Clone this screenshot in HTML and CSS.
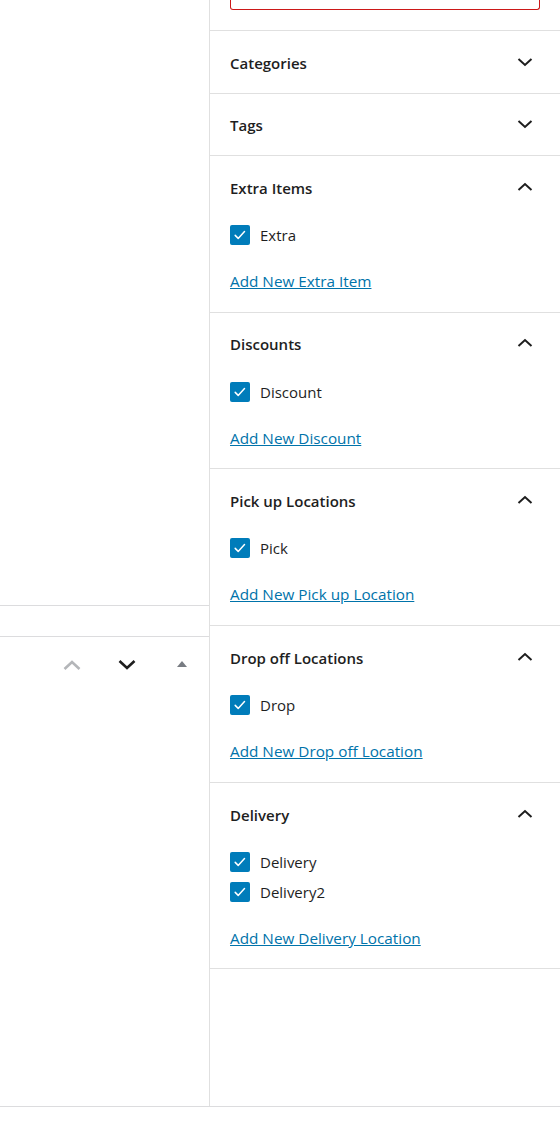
FILE: index.html
```html
<!DOCTYPE html>
<html>
<head>
<meta charset="utf-8">
<link rel="stylesheet" href="styles.css">
</head>
<body>
<div class="screen">
  <div class="main">
    <div class="main-space"></div>
    <div class="main-bar"></div>
    <div class="handles">
      <button class="handle up" aria-label="Move up">
        <svg viewBox="0 0 20 12" width="20" height="12"><path d="M2.5 10L10 3l7.5 7"/></svg>
      </button>
      <button class="handle down" aria-label="Move down">
        <svg viewBox="0 0 20 12" width="20" height="12"><path d="M2.5 2L10 9l7.5-7"/></svg>
      </button>
      <button class="handle toggle" aria-label="Toggle panel">
        <svg viewBox="0 0 12 8" width="12" height="8"><path d="M1 7h10L6 1z"/></svg>
      </button>
    </div>
  </div>
  <aside class="sidebar">
    <div class="top-field">
      <div class="field-input"></div>
    </div>

    <section class="panel">
      <div class="panel-head"><span class="panel-title">Categories</span>
        <svg class="chev" viewBox="0 0 16 10" width="16" height="10"><path d="M1.5 2l6.5 6 6.5-6"/></svg></div>
    </section>

    <section class="panel">
      <div class="panel-head"><span class="panel-title">Tags</span>
        <svg class="chev" viewBox="0 0 16 10" width="16" height="10"><path d="M1.5 2l6.5 6 6.5-6"/></svg></div>
    </section>

    <section class="panel">
      <div class="panel-head"><span class="panel-title">Extra Items</span>
        <svg class="chev" viewBox="0 0 16 10" width="16" height="10"><path d="M1.5 8L8 2l6.5 6"/></svg></div>
      <div class="panel-body">
        <label class="check"><span class="box"><svg viewBox="0 0 20 20" width="20" height="20"><path d="M5.2 10.4l3 3 6.3-6.9"/></svg></span>Extra</label>
        <a class="add-link" href="#">Add New Extra Item</a>
      </div>
    </section>

    <section class="panel">
      <div class="panel-head"><span class="panel-title">Discounts</span>
        <svg class="chev" viewBox="0 0 16 10" width="16" height="10"><path d="M1.5 8L8 2l6.5 6"/></svg></div>
      <div class="panel-body">
        <label class="check"><span class="box"><svg viewBox="0 0 20 20" width="20" height="20"><path d="M5.2 10.4l3 3 6.3-6.9"/></svg></span>Discount</label>
        <a class="add-link" href="#">Add New Discount</a>
      </div>
    </section>

    <section class="panel">
      <div class="panel-head"><span class="panel-title">Pick up Locations</span>
        <svg class="chev" viewBox="0 0 16 10" width="16" height="10"><path d="M1.5 8L8 2l6.5 6"/></svg></div>
      <div class="panel-body">
        <label class="check"><span class="box"><svg viewBox="0 0 20 20" width="20" height="20"><path d="M5.2 10.4l3 3 6.3-6.9"/></svg></span>Pick</label>
        <a class="add-link" href="#">Add New Pick up Location</a>
      </div>
    </section>

    <section class="panel">
      <div class="panel-head"><span class="panel-title">Drop off Locations</span>
        <svg class="chev" viewBox="0 0 16 10" width="16" height="10"><path d="M1.5 8L8 2l6.5 6"/></svg></div>
      <div class="panel-body">
        <label class="check"><span class="box"><svg viewBox="0 0 20 20" width="20" height="20"><path d="M5.2 10.4l3 3 6.3-6.9"/></svg></span>Drop</label>
        <a class="add-link" href="#">Add New Drop off Location</a>
      </div>
    </section>

    <section class="panel">
      <div class="panel-head"><span class="panel-title">Delivery</span>
        <svg class="chev" viewBox="0 0 16 10" width="16" height="10"><path d="M1.5 8L8 2l6.5 6"/></svg></div>
      <div class="panel-body">
        <label class="check"><span class="box"><svg viewBox="0 0 20 20" width="20" height="20"><path d="M5.2 10.4l3 3 6.3-6.9"/></svg></span>Delivery</label>
        <label class="check"><span class="box"><svg viewBox="0 0 20 20" width="20" height="20"><path d="M5.2 10.4l3 3 6.3-6.9"/></svg></span>Delivery2</label>
        <a class="add-link" href="#">Add New Delivery Location</a>
      </div>
    </section>
  </aside>
</div>
</body>
</html>
```

FILE: styles.css
```css
* { box-sizing: border-box; }
html, body { margin: 0; padding: 0; background: #fff; }
body {
  font-family: "Open Sans", "Noto Sans", "Liberation Sans", sans-serif;
  font-size: 15px;
  color: #1e1e1e;
}
.screen {
  display: grid;
  grid-template-columns: 209px 1fr;
  height: 1107px;
  border-bottom: 1px solid #dcdcde;
}
.main { display: flex; flex-direction: column; }
.main-space { height: 605px; }
.main-bar {
  height: 32px;
  border-top: 1px solid #dcdcde;
  border-bottom: 1px solid #dcdcde;
}
.handles {
  display: flex;
  justify-content: flex-end;
  height: 55px;
}
.handle {
  width: 55px;
  height: 55px;
  padding: 0;
  border: 0;
  background: none;
  display: flex;
  align-items: center;
  justify-content: center;
}
.handle svg { fill: none; stroke-width: 2.6; }
.handle.up svg { stroke: #b4b6b9; }
.handle.down svg { stroke: #1e1e1e; }
.handle.toggle svg { fill: #787c82; stroke: none; margin-top: -2px; }

.sidebar {
  border-left: 1px solid #e0e0e0;
  display: flex;
  flex-direction: column;
}
.top-field { padding: 0 20px 20px; }
.field-input {
  height: 10px;
  border: 1px solid #cc1818;
  border-top: 0;
  border-radius: 0 0 3px 3px;
}
.panel {
  border-top: 1px solid #e0e0e0;
}
.panel:last-child { border-bottom: 1px solid #e0e0e0; }
.panel-head {
  height: 61.5px;
  padding: 2px 27px 0 20px;
  display: flex;
  align-items: center;
  justify-content: space-between;
}
.panel-title {
  font-weight: 600;
  font-size: 15px;
}
.chev { fill: none; stroke: #1e1e1e; stroke-width: 2; margin-top: -2px; }
.panel-body {
  padding: 2.5px 20px 18.7px;
  display: flex;
  flex-direction: column;
  align-items: flex-start;
}
.check {
  height: 30px;
  display: flex;
  align-items: center;
  gap: 10px;
  font-size: 15px;
}
.box {
  width: 20px;
  height: 20px;
  background: #007cba;
  border-radius: 2px;
  display: flex;
}
.box svg {
  fill: none;
  stroke: #fff;
  stroke-width: 1.5;
  stroke-linecap: round;
  stroke-linejoin: round;
}
.add-link {
  margin-top: 19px;
  line-height: 24px;
  color: #0073aa;
  text-decoration: underline;
  font-size: 15.3px;
}
```
